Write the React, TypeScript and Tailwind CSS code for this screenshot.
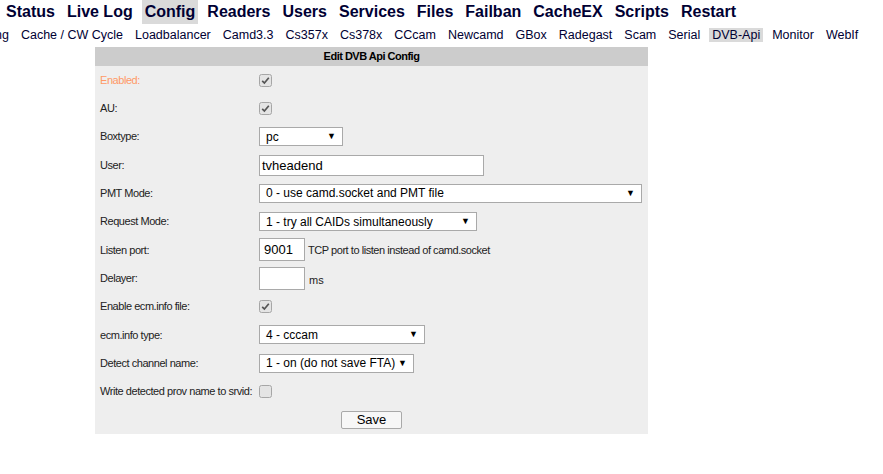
import React from "react";

const mainMenu = ["Status", "Live Log", "Config", "Readers", "Users", "Services", "Files", "Failban", "CacheEX", "Scripts", "Restart"];
const subMenu = ["Logging", "Cache / CW Cycle", "Loadbalancer", "Camd3.3", "Cs357x", "Cs378x", "CCcam", "Newcamd", "GBox", "Radegast", "Scam", "Serial", "DVB-Api", "Monitor", "WebIf"];

const CheckBox = ({ checked }: { checked: boolean }) => (
  <svg width="13" height="13" viewBox="0 0 13 13" className="block">
    <rect x="0.5" y="0.5" width="12" height="12" rx="2" fill="#e4e4e4" stroke="#a6a6a6" />
    {checked && <path d="M3.2 6.8 L5.4 9 L9.8 3.8" fill="none" stroke="#555" strokeWidth="1.7" />}
  </svg>
);

const Select = ({ value, width }: { value: string; width: string }) => (
  <div className={`flex items-center justify-between h-[19px] bg-white border border-[#a9a9a9] pl-[6px] pr-[6px] text-[12px] text-black ${width}`}>
    <span className="whitespace-nowrap">{value}</span>
    <span className="text-[9px] leading-none">▼</span>
  </div>
);

const Row = ({ label, children, labelClass = "text-[#222]" }: { label: string; children?: React.ReactNode; labelClass?: string }) => (
  <div className="grid grid-cols-[164px_1fr] items-center h-[28.3px]">
    <div className={`pl-[5px] text-[11px] tracking-[-0.45px] whitespace-nowrap ${labelClass}`}>{label}</div>
    <div className="flex items-center">{children}</div>
  </div>
);

export default function App() {
  return (
    <div className="min-h-[474px] bg-white" style={{ fontFamily: '"Liberation Sans", Arial, sans-serif' }}>
      <div className="flex gap-[6px] pl-[3px] h-[24px] items-center whitespace-nowrap">
        {mainMenu.map((m) => (
          <span
            key={m}
            className={`px-[3px] h-[24px] leading-[24px] text-[16px] font-bold text-[#000033] ${m === "Config" ? "bg-[#dadada]" : ""}`}
          >
            {m}
          </span>
        ))}
      </div>
      <div className="overflow-hidden mt-[4px]">
        <div className="flex gap-[6px] ml-[-38.6px] h-[14px] items-center whitespace-nowrap">
          {subMenu.map((m) => (
            <span
              key={m}
              className={`px-[3px] h-[14px] leading-[14px] text-[12.5px] text-[#000033] ${m === "DVB-Api" ? "bg-[#dadada]" : ""}`}
            >
              {m}
            </span>
          ))}
        </div>
      </div>

      <div className="ml-[95px] mt-[5px] w-[553px] bg-[#eeeeee]">
        <div className="h-[19px] bg-[#cccccc] flex items-center justify-center text-[11px] tracking-[-0.5px] font-bold text-black">
          Edit DVB Api Config
        </div>
        <div>
          <Row label="Enabled:" labelClass="text-[#ff9966]">
            <CheckBox checked />
          </Row>
          <Row label="AU:">
            <CheckBox checked />
          </Row>
          <Row label="Boxtype:">
            <Select value="pc" width="w-[84px]" />
          </Row>
          <Row label="User:">
            <div className="w-[225px] h-[21px] bg-white border border-[#a9a9a9] pl-[2px] text-[13px] leading-[19px] text-black">
              tvheadend
            </div>
          </Row>
          <Row label="PMT Mode:">
            <Select value="0 - use camd.socket and PMT file" width="w-[383px]" />
          </Row>
          <Row label="Request Mode:">
            <Select value="1 - try all CAIDs simultaneously" width="w-[218px]" />
          </Row>
          <Row label="Listen port:">
            <div className="w-[46px] h-[23px] bg-white border border-[#a9a9a9] pl-[4px] text-[13px] leading-[21px] text-black">
              9001
            </div>
            <span className="ml-[3px] text-[11px] tracking-[-0.45px] text-[#222]">TCP port to listen instead of camd.socket</span>
          </Row>
          <Row label="Delayer:">
            <div className="w-[46px] h-[23px] bg-white border border-[#a9a9a9]" />
            <span className="ml-[4px] text-[11px] text-[#222] mt-[4px]">ms</span>
          </Row>
          <Row label="Enable ecm.info file:">
            <CheckBox checked />
          </Row>
          <Row label="ecm.info type:">
            <Select value="4 - cccam" width="w-[166px]" />
          </Row>
          <Row label="Detect channel name:">
            <Select value="1 - on (do not save FTA)" width="w-[155px]" />
          </Row>
          <Row label="Write detected prov name to srvid:">
            <CheckBox checked={false} />
          </Row>
          <div className="flex items-center justify-center h-[28.3px]">
            <button className="w-[61px] h-[18px] bg-[#f7f7f7] border border-[#a9a9a9] rounded-[2px] text-[13px] leading-[16px] text-black">
              Save
            </button>
          </div>
        </div>
      </div>
    </div>
  );
}
